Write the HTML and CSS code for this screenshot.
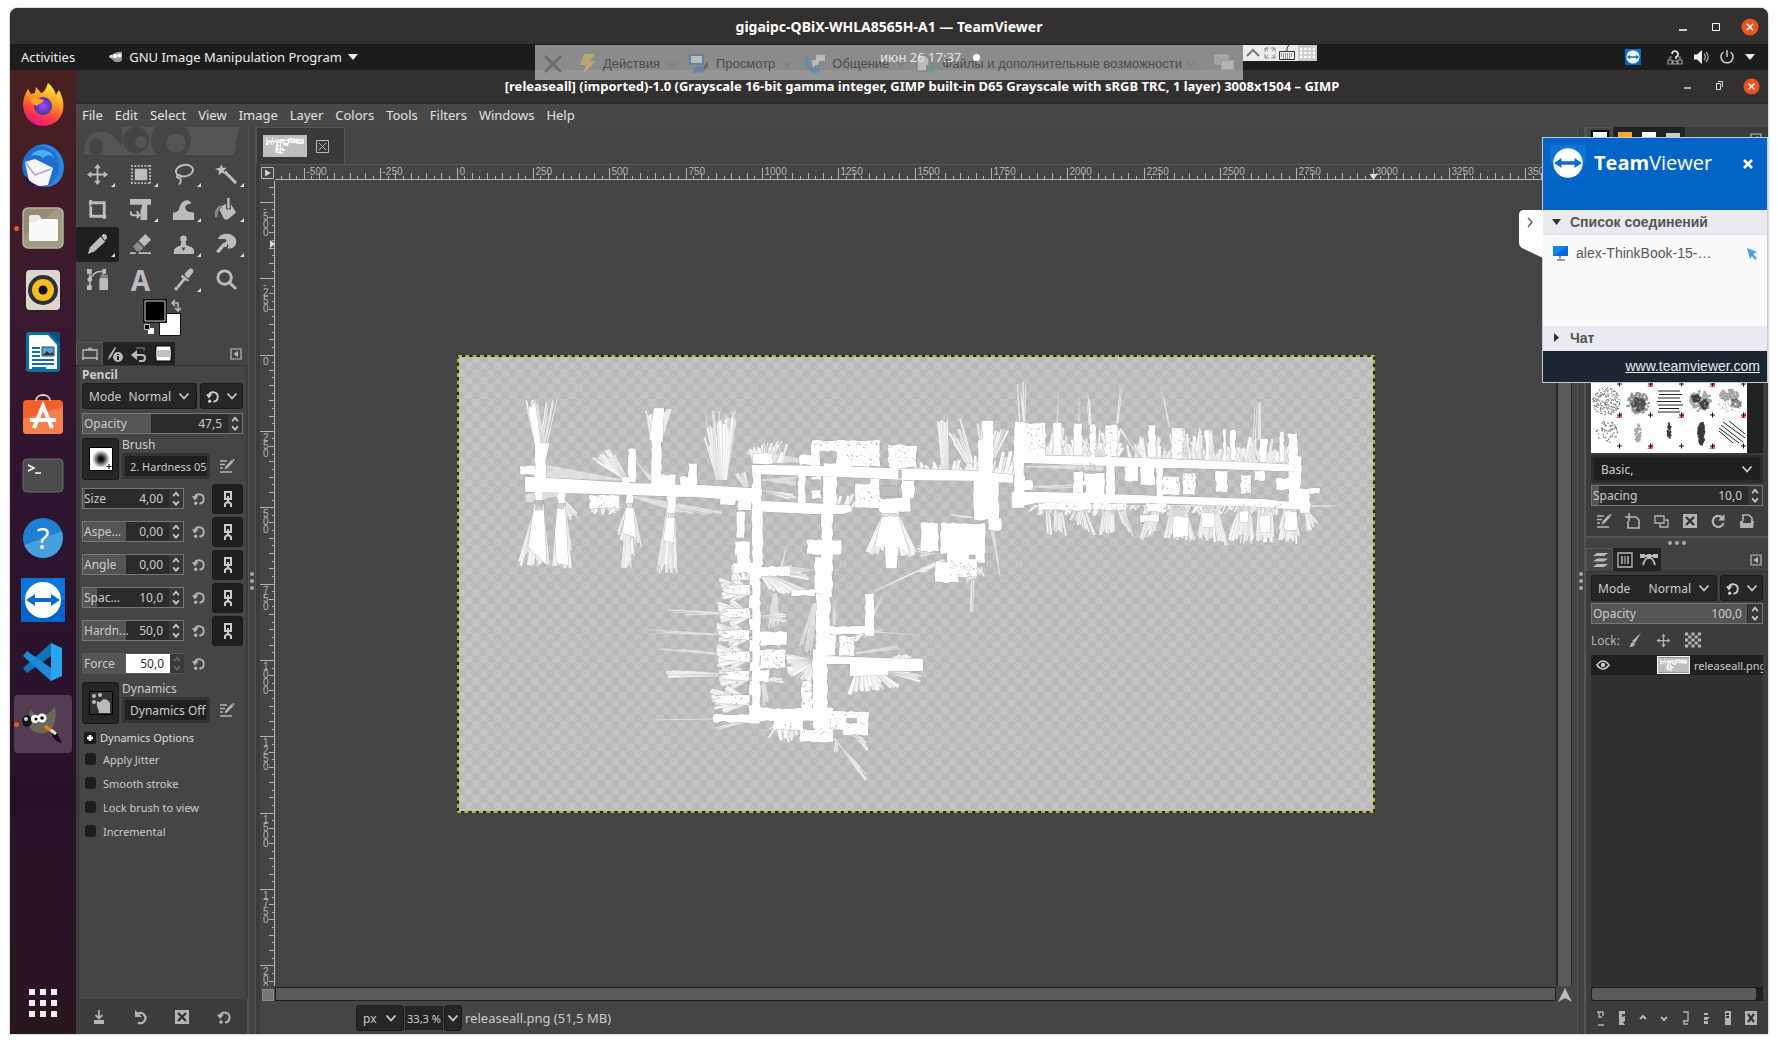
FILE: index.html
```html
<!DOCTYPE html>
<html lang="ru">
<head>
<meta charset="utf-8">
<title>gigaipc-QBiX-WHLA8565H-A1 — TeamViewer</title>
<link rel="stylesheet" href="styles.css">
</head>
<body>
<svg class="defs" width="0" height="0" aria-hidden="true">
  <defs>
    <symbol id="i-chev" viewBox="0 0 12 12"><path d="M1.500 3.500 6 8.500l4.500-5" fill="none" stroke="currentColor" stroke-width="1.800"/></symbol>
    <symbol id="i-reset" viewBox="0 0 16 16"><path d="M4 6.500a5 5 0 1 1 5 7" fill="none" stroke="currentColor" stroke-width="2"/><path d="M1 5.500h7L4 10z" fill="currentColor"/><circle cx="5" cy="13" r="1.800" fill="currentColor"/></symbol>
    <symbol id="i-undo" viewBox="0 0 16 16"><path d="M4.500 5a5 5 0 1 1 .5 8.500" fill="none" stroke="currentColor" stroke-width="2.200"/><path d="M2 1v7h7z" fill="currentColor"/></symbol>
    <symbol id="i-refresh" viewBox="0 0 16 16"><path d="M12.500 5a5.500 5.500 0 1 0 1 5" fill="none" stroke="currentColor" stroke-width="2.200"/><path d="M14.500 1v6.500H8z" fill="currentColor"/></symbol>
    <symbol id="i-edit" viewBox="0 0 16 16"><path d="M1 3h7M1 6.500h5M1 10h3M1 14h12" stroke="currentColor" stroke-width="1.600"/><path d="m5.500 11.500 1-3L12.500 2l2 1.700-6.200 6.600z" fill="currentColor"/><circle cx="14.500" cy="2" r="1" fill="currentColor"/></symbol>
    <symbol id="i-chain" viewBox="0 0 14 18"><path d="M4 2h6v7H4z" fill="none" stroke="currentColor" stroke-width="2"/><path d="M7 6v7M4 17v-3l1.500-1.500h3L10 14v3" fill="none" stroke="currentColor" stroke-width="2"/></symbol>
    <symbol id="i-spin" viewBox="0 0 12 20"><path d="M3 7.500 6 4l3 3.500M3 13l3 3.500L9 13" fill="none" stroke="currentColor" stroke-width="1.800"/></symbol>
    <symbol id="i-delete" viewBox="0 0 16 16"><path d="M1 1h14v14H1z" fill="currentColor"/><path d="m4 4 8 8m0-8-8 8" stroke="#333" stroke-width="2.400"/></symbol>
    <symbol id="i-menu" viewBox="0 0 12 12"><path d="M1 1h10v10H1z" fill="none" stroke="currentColor" stroke-width="1.200"/><path d="M8 3v6L3.500 6z" fill="currentColor"/></symbol>
    <symbol id="i-move" viewBox="0 0 24 24"><path d="M12 4v16M4 12h16" stroke="currentColor" stroke-width="2"/><path d="m12 1 3.500 4.500h-7zM12 23l3.500-4.500h-7zM1 12l4.500 3.500v-7zM23 12l-4.500 3.500v-7z" fill="currentColor"/></symbol>
    <symbol id="i-tv" viewBox="0 0 44 44"><path d="M0 0h44v44H0z" fill="#0b74dd"/><path d="M0 22h44v22H0z" fill="#0864c8"/><circle cx="22" cy="22" r="18" fill="#fff"/><path d="m5 22 9-6v4h16v-4l9 6-9 6v-4H14v4z" fill="#0b6bd0"/></symbol>
    <symbol id="i-close" viewBox="0 0 20 20"><circle cx="10" cy="10" r="9.500" fill="#e95420"/><path d="m6.500 6.500 7 7m0-7-7 7" stroke="#fff" stroke-width="1.600"/></symbol>
  </defs>
</svg>

<div class="window">
  <header class="titlebar outer">
    <h1>gigaipc-QBiX-WHLA8565H-A1 — TeamViewer</h1>
    <div class="wbtns">
      <button aria-label="Minimize"><svg width="16" height="16"><path d="M4 11h8" stroke="#fff" stroke-width="1.500"/></svg></button>
      <button aria-label="Maximize"><svg width="16" height="16"><path d="M4.500 4.500h7v7h-7z" fill="none" stroke="#fff"/></svg></button>
      <button aria-label="Close"><svg width="18" height="18"><use href="#i-close"/></svg></button>
    </div>
  </header>

  <div class="topbar">
    <button class="tb">Activities</button>
    <button class="tb app"><svg width="14" height="12" viewBox="0 0 14 12"><path d="M1 6c3-4 8-6 12-5v8c-2 3-7 3-9 0z" fill="#999"/><circle cx="6" cy="5" r="2.200" fill="#fff"/><circle cx="10.500" cy="4.500" r="2" fill="#fff"/><circle cx="2" cy="5.500" r="1.700" fill="#ddd"/></svg>GNU Image Manipulation Program<svg width="10" height="8"><path d="M0 1h10L5 7z" fill="#eee"/></svg></button>
    <div class="tray">
      <svg width="16" height="16"><use href="#i-tv"/></svg>
      <svg class="net" width="16" height="16" viewBox="0 0 16 16"><path d="M5 5a3 3 0 1 1 4 3v2" fill="none" stroke="#ddd" stroke-width="1.800"/><path d="M1 11h4v4H1zM11 11h4v4h-4zM6 12h4v3H6zM3 11V8h2M13 11V8h-2" fill="none" stroke="#999" stroke-width="1.200"/></svg>
      <svg width="16" height="16" viewBox="0 0 16 16"><path d="M1 5.500h3L9 1v14l-5-4.500H1z" fill="#eee"/><path d="M11 5a4 4 0 0 1 0 6M13 3a7 7 0 0 1 0 10" fill="none" stroke="#aaa" stroke-width="1.300"/></svg>
      <svg width="16" height="16" viewBox="0 0 16 16"><path d="M8 1v7M4.500 3a6 6 0 1 0 7 0" fill="none" stroke="#ccc" stroke-width="1.500"/></svg>
      <svg width="10" height="8"><path d="M0 1h10L5 7z" fill="#eee"/></svg>
    </div>
  </div>

  <div class="tvbar">
    <button aria-label="Закрыть" class="t-x"><svg width="18" height="18"><path d="m1 1 16 16M17 1 1 17" stroke="#4a4a4a" stroke-width="2.500"/></svg></button>
    <button class="t1"><svg width="16" height="20"><path d="M4 0h11l-5 7h6L3 20l3-9H0z" fill="#f0c05a"/></svg>Действия<svg class="cv" width="10" height="10"><use href="#i-chev"/></svg></button>
    <button class="t2"><svg width="20" height="20"><path d="M1 1h13v9H1z" fill="#eee" stroke="#3a78bc" stroke-width="2"/><path d="M4 19c0-6 4-8 10-6l1 5z" fill="#3a78bc"/><path d="m14 13 5-6v6l-4 3z" fill="#444"/></svg>Просмотр<svg class="cv" width="10" height="10"><use href="#i-chev"/></svg></button>
    <button class="t3"><svg width="21" height="20"><path d="M1 3c2-1 4 0 4 5-2 2 3 7 5 6 3-1 6 1 6 3-3 5-15 2-15-14z" fill="#3a88d8"/><path d="M12 1h9v6h-6v3l-2-3h-1zM8 6h6v5h-3l-2 3z" fill="#eee"/></svg>Общение<svg class="cv" width="10" height="10"><use href="#i-chev"/></svg></button>
    <button class="t4"><svg width="22" height="20"><path d="M1 1h8l4 4v12H1z" fill="#eee" stroke="#666"/><path d="M14 8a2 2 0 0 1 4 2h3v4h-2v5h-5v-2h-4v-6h4z" fill="#5a9a80"/></svg>Файлы и дополнительные возможности<svg class="cv" width="10" height="10"><use href="#i-chev"/></svg></button>
    <button class="t5" aria-label="Экраны"><svg width="21" height="20"><path d="M1 1h13v9H1z" fill="#bbb" stroke="#ddd"/><path d="M7 6h13v10H7z" fill="#ddd" stroke="#999"/><path d="M13 16v3M9 19h8" stroke="#999" stroke-width="2"/></svg></button>
  </div>
  <time class="clock">июн 26 17:37<i></i></time>
  <div class="minibar">
    <svg width="74" height="16"><path d="M0 0h74v16H0z" fill="#ececec"/><path d="M55 0h19v16H55z" fill="#c9c9c9"/><path d="m4 11 6-6 6 6" fill="none" stroke="#777" stroke-width="2"/><path d="M22 7V3h4M28 3h4v4M22 9v4h4M28 13h4V9M22 3l3 3m7-3-3 3m-7 7 3-3m7 3-3-3" fill="none" stroke="#888"/><path d="M36.500 6.500h15v8h-15z" fill="#eee" stroke="#333"/><path d="M38 9h12M38 11h12M40 13h8" stroke="#333" stroke-dasharray="1 1"/><path d="M44 6V3l2-3" stroke="#333" fill="none"/><path d="M57 4h16M57 8h16M57 12h16" stroke="#fff" stroke-width="2.500" stroke-dasharray="2.500 1.700"/></svg>
  </div>

  <div class="desktop">
    <nav class="dock" aria-label="Dock">
      <a href="#" aria-label="Firefox"><svg width="44" height="46" viewBox="0 0 44 46"><defs><linearGradient id="ff" x1=".7" y1="0" x2=".3" y2="1"><stop offset="0" stop-color="#fff044"/><stop offset=".4" stop-color="#ff9a1f"/><stop offset=".7" stop-color="#ff4040"/><stop offset="1" stop-color="#e3108c"/></linearGradient><radialGradient id="fp"><stop offset="0" stop-color="#9a4dff"/><stop offset="1" stop-color="#4b32b0"/></radialGradient></defs><path d="M27 2c6 5 7 9 8 12l3-5c7 13 5 24-1 30-9 9-23 7-30-1C1 30 0 19 7 8l3 5 4-1 1-6 5 6c4-1 5-5 7-10z" fill="url(#ff)"/><circle cx="22" cy="25" r="9" fill="url(#fp)"/><path d="M9 18c6-3 9 0 14 1-2 4-5 3-7 6-3-1-6-3-7-7z" fill="#ffa41c"/></svg></a>
      <a href="#" aria-label="Thunderbird"><svg width="46" height="46" viewBox="0 0 46 46"><path d="M14 4C22-1 32 1 38 8c8 9 8 23 0 31-6 6-15 6-22 3L4 32C-1 20 5 9 14 4z" fill="#1f6fd0"/><path d="M14 4c9-3 24 2 25 17 1 11-5 18-12 23 18-2 20-22 12-34C32 1 22 0 14 4z" fill="#2f86dd"/><path d="M11 13c5-8 18-8 23 1-5-3-8-2-11 1-4-3-8-4-12-2z" fill="#4fb0f2"/><path d="M5 19 15 16l18 9-5 17-13 2-6-6z" fill="#f6f6f8"/><path d="m5 19 10 13 16-6" fill="none" stroke="#a8aebc" stroke-width="1.500"/><path d="M5 33c4 5 10 9 17 11-9 1-17-3-17-11z" fill="#201a55"/></svg></a>
      <a href="#" aria-label="Files" class="running"><svg width="42" height="42" viewBox="0 0 42 42"><rect x="1" y="1" width="40" height="40" rx="5" fill="#a39a82"/><path d="M1 30V6q0-5 5-5h30z" fill="#948b76"/><rect x="1" y="1" width="40" height="40" rx="5" fill="none" stroke="#b9b19c" stroke-width="1.500"/><path d="M7 10q0-2 2-2h8l3 4h14q2 0 2 2v18q0 2-2 2H9q-2 0-2-2z" fill="#ebe8e0"/><path d="M7 15h7l3-3h17q2 0 2 2v18q0 2-2 2H9q-2 0-2-2z" fill="#fbfaf8"/></svg></a>
      <a href="#" aria-label="Rhythmbox"><svg width="36" height="42" viewBox="0 0 36 42"><rect x="1" y="1" width="34" height="40" rx="4" fill="#dcd6cb"/><circle cx="18" cy="21" r="15" fill="#2c303a"/><circle cx="18" cy="21" r="11" fill="#f5bd1f"/><circle cx="18" cy="21" r="4.500" fill="#111"/></svg></a>
      <a href="#" aria-label="LibreOffice Writer"><svg width="36" height="42" viewBox="0 0 36 42"><path d="M4 1h20l11 12v25q0 3-3 3H4q-3 0-3-3V4q0-3 3-3z" fill="#0e6fa8"/><path d="M5 4h18l9 10v24H4V5z" fill="#fdfdfd"/><path d="M24 1h11v12z" fill="#0b4f7c"/><path d="M7 17h8M7 21h8M7 25h8M7 29h22M7 33h22M7 37h14" stroke="#0e6fa8" stroke-width="1.800"/><path d="M17 16h12v9H17z" fill="#4da3e0" stroke="#444"/><path d="m18 24 4-4 3 3 2-2 2 3z" fill="#333"/></svg></a>
      <a href="#" aria-label="Ubuntu Software"><svg width="42" height="42" viewBox="0 0 42 42"><rect x="1" y="7" width="40" height="34" rx="4" fill="#f0622d"/><path d="M1 26 41 14v23q0 4-4 4H5q-4 0-4-4z" fill="#f4804e"/><path d="M14 8c0-8 14-8 14 0" fill="none" stroke="#e8cfae" stroke-width="1.800"/><path d="m12 35 9-22 9 22M8 27h26" fill="none" stroke="#fff" stroke-width="4"/></svg></a>
      <a href="#" aria-label="Terminal"><svg width="42" height="36" viewBox="0 0 42 36"><rect x="1" y="1" width="40" height="33" rx="4" fill="#4c4c4c" stroke="#6a6a6a"/><path d="m6 7 6 3-6 3M13 15h6" fill="none" stroke="#fff" stroke-width="1.500"/></svg></a>
      <a href="#" aria-label="Help" class="help"><span>?</span></a>
      <a href="#" aria-label="TeamViewer"><svg width="44" height="44"><use href="#i-tv"/></svg></a>
      <a href="#" aria-label="Visual Studio Code"><svg width="42" height="42" viewBox="0 0 42 42"><path d="M29 2 1 27l4 5 27-19z" fill="#1273b8"/><path d="M29 40 1 15l4-5 27 19z" fill="#1c8ad6"/><path d="m29 2 11 5v28l-11 5z" fill="#2aa5ee"/></svg></a>
      <a href="#" aria-label="GIMP" class="running active"><svg width="42" height="42" viewBox="0 0 42 42"><path d="M8 6c3 5 6 6 12 6 6 0 11-5 13-9 2 13 0 24-10 27C12 32 6 25 6 17z" fill="#6d6756"/><ellipse cx="5" cy="18" rx="5" ry="6" fill="#16181c"/><circle cx="4" cy="16" r="2" fill="#ccd"/><circle cx="13" cy="16" r="4" fill="#fff"/><circle cx="20" cy="15" r="4.500" fill="#fff"/><circle cx="14" cy="16" r="1.500"/><circle cx="20" cy="15" r="1.800"/><path d="m23 23 8 6" stroke="#e8852a" stroke-width="3"/><path d="m30 27 5 3 5 10c-5-1-9-4-10-9z" fill="#111"/><path d="m29 27 5 4" stroke="#ddd" stroke-width="3"/></svg></a>
      <a href="#" aria-label="Show Applications" class="grid"><svg width="30" height="30"><path d="M1 4h28M1 15h28M1 26h28" stroke="#eee" stroke-width="6" stroke-dasharray="6 5"/></svg></a>
    </nav>

    <main class="gimp">
      <header class="titlebar inner">
        <h2>[releaseall] (imported)-1.0 (Grayscale 16-bit gamma integer, GIMP built-in D65 Grayscale with sRGB TRC, 1 layer) 3008x1504 – GIMP</h2>
        <div class="wbtns">
          <button aria-label="Minimize"><svg width="16" height="16"><path d="M5 10h7" stroke="#ddd" stroke-width="1.500"/></svg></button>
          <button aria-label="Restore"><svg width="16" height="16"><path d="M5.500 5.500h4v6h-4zM7 3.500h4.500V9" fill="none" stroke="#ddd"/></svg></button>
          <button aria-label="Close"><svg width="17" height="17"><use href="#i-close"/></svg></button>
        </div>
      </header>
      <nav class="menubar">
        <button>File</button><button>Edit</button><button>Select</button><button>View</button><button>Image</button><button>Layer</button><button>Colors</button><button>Tools</button><button>Filters</button><button>Windows</button><button>Help</button>
      </nav>
      <div class="work">
        <aside class="left">
          <svg class="wilber" width="155" height="28" viewBox="0 0 155 28"><path d="M0 28C-1 8 12 2 24 6c6 2 10 8 14 14V0h117l-5 28z" fill="#555"/><g fill="#454545"><ellipse cx="12" cy="20" rx="7" ry="9"/><circle cx="52" cy="13" r="13"/><circle cx="87" cy="14" r="20"/></g><circle cx="57" cy="15" r="6" fill="#555"/><circle cx="92" cy="16" r="9.500" fill="#555"/></svg>
          <div class="tools">
            <button class="m" aria-label="Move"><svg viewBox="0 0 24 24"><use href="#i-move"/></svg></button>
            <button class="m" aria-label="Rectangle Select"><svg viewBox="0 0 24 24"><path d="M6 6h13v12H6z" fill="currentColor"/><path d="M2 3h21M2 21h21M3 2v20M22 2v20" stroke="currentColor" stroke-width="2" stroke-dasharray="2 1.500"/></svg></button>
            <button class="m" aria-label="Free Select"><svg viewBox="0 0 24 24"><ellipse cx="13" cy="8" rx="9" ry="6" fill="none" stroke="currentColor" stroke-width="2" transform="rotate(-10 13 8)"/><path d="M6 12c-3 4 2 3 3 5 1 3-1 5-2 5M5 13c3-1 5 0 5 2" fill="none" stroke="currentColor" stroke-width="2"/></svg></button>
            <button class="m" aria-label="Fuzzy Select"><svg viewBox="0 0 24 24"><path d="m10 9 12 12" stroke="currentColor" stroke-width="3"/><path d="m7 1 1 4 4 0-3 3 2 4-4-2-3 3 0-5-4-2 5-1z" fill="currentColor"/></svg></button>
            <button aria-label="Crop"><svg viewBox="0 0 24 24"><path d="M5 2v17h16M3 5h16v17" fill="none" stroke="currentColor" stroke-width="3"/><path d="M5 7h2v2H5z" fill="#454545"/></svg></button>
            <button class="m" aria-label="Transform"><svg viewBox="0 0 24 24"><path d="M1 1h22v6H1zM14 7h5v16h-7V13z" fill="currentColor"/><path d="M2 14v2q0 2 3 2h5M8 14l3 4-3 3" fill="none" stroke="currentColor" stroke-width="2"/></svg></button>
            <button class="m" aria-label="Warp"><svg viewBox="0 0 24 24"><path d="M1 23v-8c5 0 6-2 7-6 2-7 10-9 12-4 0 2-5 1-6 4-1 3 2 6 9 6v8z" fill="currentColor"/></svg></button>
            <button class="m" aria-label="Bucket Fill"><svg viewBox="0 0 24 24"><path d="m6 9 9-5 7 11-8 7q-3 2-5-1L5 13z" fill="currentColor"/><path d="M14 1v11" stroke="#454545" stroke-width="5"/><path d="M14 0v11" stroke="currentColor" stroke-width="2.500"/><path d="M7 9c-5 1-6 5-6 11" fill="none" stroke="#888" stroke-width="3"/></svg></button>
            <button class="m sel" aria-label="Pencil"><svg viewBox="0 0 24 24"><path d="m2 22 2-7L15 4l5 5L9 19z" fill="currentColor"/><path d="m16 3 2-2q4 0 4 4l-2 3z" fill="currentColor"/></svg></button>
            <button aria-label="Eraser"><svg viewBox="0 0 24 24"><path d="m10 8 7-7 6 6-7 7z" fill="currentColor"/><path d="m9 9 6 6-3 4H8l-4-5z" fill="#8a8a8a"/><path d="M1 21h6M10 21h13" stroke="currentColor" stroke-width="2"/></svg></button>
            <button class="m" aria-label="Clone"><svg viewBox="0 0 24 24"><circle cx="12" cy="6" r="3.500" fill="currentColor"/><path d="M10 8h4l1 5c5 1 7 2 8 5v4H2v-4c1-3 4-4 7-5z" fill="currentColor"/><path d="M10 15h4l-2 4z" fill="#454545"/></svg></button>
            <button class="m" aria-label="Smudge"><svg viewBox="0 0 24 24"><path d="M3 6C6-1 19-1 22 7c1 6-3 10-9 9l-4-1-5 6-3-2 7-8c2-2 4-1 4-3 0-3-6-1-9-2z" fill="currentColor"/><path d="M9 15c4 1 5-1 4-3" fill="none" stroke="#454545" stroke-width="1.500"/></svg></button>
            <button aria-label="Paths"><svg viewBox="0 0 24 24"><path d="M4 4v17M4 12C8 4 14 3 18 4v3" fill="none" stroke="currentColor" stroke-width="1.500"/><path d="M1 1h5v5H1zM1 18h5v5H1zM17 1h4v5h-4zM14 12q0-2 4.500-2t4.500 2v11h-9z" fill="currentColor"/><path d="M15 7h8v3h-8z" fill="#888"/><circle cx="4" cy="12" r="2.500" fill="currentColor"/></svg></button>
            <button class="lettr" aria-label="Text">A</button>
            <button class="m" aria-label="Color Picker"><svg viewBox="0 0 24 24"><path d="m14 5 4-4q3-2 4 1t-2 5l-3 4-4-4zM11 7l7 6-2 1-7-5z" fill="currentColor"/><path d="M14 10 6 20" stroke="currentColor" stroke-width="3"/><circle cx="4.500" cy="21.500" r="2" fill="currentColor"/></svg></button>
            <button aria-label="Zoom"><svg viewBox="0 0 24 24"><circle cx="10" cy="10" r="7" fill="none" stroke="currentColor" stroke-width="3"/><path d="m15 15 7 7" stroke="currentColor" stroke-width="3"/></svg></button>
          </div>
          <svg class="colors" width="50" height="38" viewBox="0 0 50 38"><path d="M18.500 14.500h21v22h-21z" fill="#fff" stroke="#111"/><path d="M3 1h22v22H3z" fill="#000" stroke="#111" stroke-width="2"/><path d="M4 2h20v20H4z" fill="#000" stroke="#ccc"/><path d="M31 4h6v7M34 1l-3 3 3 3m0 2 3 3 3-3" fill="none" stroke="#bbb" stroke-width="1.500"/><path d="M7 29h6v6H7z" fill="#fff"/><path d="M3.500 25.500h5v5h-5z" fill="#000" stroke="#bbb"/></svg>
          <div class="tabs">
            <button class="on" aria-label="Tool Options"><svg width="18" height="16"><path d="M2 4h14v8H2zM1 13h2M15 13h2M6 4l3-2 3 2" fill="none" stroke="currentColor" stroke-width="1.300"/></svg></button>
            <button aria-label="Device Status"><svg width="18" height="18"><path d="m2 15 1-4 6-9 1 1-5 9z" fill="currentColor"/><circle cx="12" cy="12" r="5" fill="currentColor"/><path d="M12 9v1M12 11v4" stroke="#222" stroke-width="2"/></svg></button>
            <button aria-label="Undo History"><svg width="18" height="18"><path d="M6 3h8v3" fill="none" stroke="#555" stroke-width="2"/><path d="M4 10h8q3 0 3 3t-3 3H9" fill="none" stroke="currentColor" stroke-width="2"/><path d="M1 10l6-5v10z" fill="currentColor"/></svg></button>
            <button aria-label="Images"><svg width="17" height="17"><path d="M1 1h15v15H1z" fill="#fff" stroke="#000"/><path d="M1 5h15v7H1z" fill="#c0c0c0"/></svg></button>
            <button class="tmenu" aria-label="Configure tab"><svg width="12" height="12"><use href="#i-menu"/></svg></button>
          </div>
          <div class="options">
            <strong>Pencil</strong>
            <div class="row2">
              <label class="combo"><span>Mode</span><select><option>Normal</option></select><svg width="12" height="12"><use href="#i-chev"/></svg></label>
              <button class="btn rs" aria-label="Reset mode"><svg width="15" height="15"><use href="#i-reset"/></svg><svg width="12" height="12"><use href="#i-chev"/></svg></button>
            </div>
            <label class="spin op"><b style="width:43%"></b><span>Opacity</span><input value="47,5"><svg width="12" height="20"><use href="#i-spin"/></svg></label>
            <div class="pick">
              <button class="btn big" aria-label="Brush"><svg width="24" height="24"><defs><radialGradient id="br"><stop offset="0"/><stop offset=".3" stop-color="#222"/><stop offset="1" stop-color="#fff"/></radialGradient></defs><path d="M.5.500h23v23H.5z" fill="#fff" stroke="#000"/><circle cx="12" cy="12" r="9" fill="url(#br)"/><path d="M20 17v5M17.500 19.500h5" stroke="#114"/></svg></button>
              <div><label for="brush">Brush</label><div class="pickrow"><input id="brush" class="small" value="2. Hardness 050"><button class="ic" aria-label="Edit brush"><svg width="16" height="16"><use href="#i-edit"/></svg></button></div></div>
            </div>
            <div class="sliders">
              <div class="srow"><label class="spin"><b style="width:2%"></b><span>Size</span><input value="4,00"><svg width="12" height="20"><use href="#i-spin"/></svg></label><button class="ic" aria-label="Reset"><svg width="15" height="15"><use href="#i-reset"/></svg></button><button class="btn ch" aria-label="Link"><svg width="14" height="18"><use href="#i-chain"/></svg></button></div>
              <div class="srow"><label class="spin"><b style="width:43%"></b><span>Aspe…</span><input value="0,00"><svg width="12" height="20"><use href="#i-spin"/></svg></label><button class="ic" aria-label="Reset"><svg width="15" height="15"><use href="#i-reset"/></svg></button><button class="btn ch" aria-label="Link"><svg width="14" height="18"><use href="#i-chain"/></svg></button></div>
              <div class="srow"><label class="spin"><b style="width:43%"></b><span>Angle</span><input value="0,00"><svg width="12" height="20"><use href="#i-spin"/></svg></label><button class="ic" aria-label="Reset"><svg width="15" height="15"><use href="#i-reset"/></svg></button><button class="btn ch" aria-label="Link"><svg width="14" height="18"><use href="#i-chain"/></svg></button></div>
              <div class="srow"><label class="spin"><b style="width:14%"></b><span>Spac…</span><input value="10,0"><svg width="12" height="20"><use href="#i-spin"/></svg></label><button class="ic" aria-label="Reset"><svg width="15" height="15"><use href="#i-reset"/></svg></button><button class="btn ch" aria-label="Link"><svg width="14" height="18"><use href="#i-chain"/></svg></button></div>
              <div class="srow"><label class="spin"><b style="width:43%"></b><span>Hardn…</span><input value="50,0"><svg width="12" height="20"><use href="#i-spin"/></svg></label><button class="ic" aria-label="Reset"><svg width="15" height="15"><use href="#i-reset"/></svg></button><button class="btn ch" aria-label="Link"><svg width="14" height="18"><use href="#i-chain"/></svg></button></div>
              <div class="srow"><label class="spin force"><b style="width:43%"></b><span>Force</span><input value="50,0"><svg width="12" height="20"><use href="#i-spin"/></svg></label><button class="ic" aria-label="Reset"><svg width="15" height="15"><use href="#i-reset"/></svg></button></div>
            </div>
            <div class="pick dyn">
              <button class="btn big" aria-label="Dynamics"><svg width="24" height="24"><path d="M.5.500h23v23H.5z" fill="#333" stroke="#000"/><g fill="#bbb"><circle cx="5" cy="5" r="2"/><circle cx="11" cy="4" r="2"/><circle cx="5" cy="11" r="2"/><path d="M8 10c3 2 4 1 5-1 3-2 6 0 8 3v10H10c0-4-3-6-2-12z"/></g></svg></button>
              <div><label for="dyn">Dynamics</label><div class="pickrow"><input id="dyn" value="Dynamics Off"><button class="ic" aria-label="Edit dynamics"><svg width="16" height="16"><use href="#i-edit"/></svg></button></div></div>
            </div>
            <button class="expand"><svg width="12" height="12"><rect width="12" height="12" rx="2" fill="#1a1a1a"/><path d="M6 3v6M3 6h6" stroke="#fff" stroke-width="2.500"/></svg>Dynamics Options</button>
            <label class="chk"><input type="checkbox">Apply Jitter</label>
            <label class="chk"><input type="checkbox">Smooth stroke</label>
            <label class="chk"><input type="checkbox">Lock brush to view</label>
            <label class="chk"><input type="checkbox">Incremental</label>
          </div>
          <div class="foot">
            <button aria-label="Save"><svg width="16" height="16"><path d="M8 1v8M4.500 6 8 9.500 11.500 6" fill="none" stroke="currentColor" stroke-width="1.800"/><path d="M3 11h10v4H3z" fill="currentColor"/></svg></button>
            <button aria-label="Restore"><svg width="16" height="16"><use href="#i-undo"/></svg></button>
            <button aria-label="Delete"><svg width="16" height="16"><use href="#i-delete"/></svg></button>
            <button aria-label="Reset"><svg width="16" height="16"><use href="#i-reset"/></svg></button>
          </div>
        </aside>
        <div class="split"><i></i><i></i><i></i></div>

        <section class="center">
          <div class="imgtabs">
            <div class="imgtab"><svg width="44" height="22" viewBox="457 355 918 457"><use href="#picture"/></svg><button aria-label="Close"><svg width="13" height="13"><path d="M.5.500h12v12H.5zM3 3l7 7m0-7-7 7" fill="none" stroke="#bbb"/></svg></button></div>
          </div>
          <div class="view">
            <button class="corner" aria-label="Image menu"><svg width="13" height="12"><path d="M.5.500h12v11H.5z" fill="none" stroke="#bbb"/><path d="M4 2.500v7L10 6z" fill="#ccc"/></svg></button>
            <svg class="hruler"></svg>
            <svg class="vruler"></svg>
            <div class="canvas">
              <svg class="map" width="918" height="458" viewBox="457 355 918 458">
                <defs>
                  <pattern id="chk" x="458" y="355" width="2" height="2" patternUnits="userSpaceOnUse" patternTransform="translate(458 355) scale(7.330) translate(-458 -355)"><path d="M0 0h2v2H0z" fill="#c4c4c4"/><path d="M1 0h1v1H1zM0 1h1v1H0z" fill="#b9b9b9"/></pattern>
                </defs>
                <g id="picture"><path d="M457 355h918v458H457z" fill="url(#chk)"/><g id="scan"></g></g>
                <path d="M458 356h916v456H458z" fill="none" stroke="#222" stroke-width="2"/>
                <path d="M458 356h916v456H458z" fill="none" stroke="#e8e82a" stroke-width="1.500" stroke-dasharray="4 3.300"/>
              </svg>
            </div>
            <div class="vscroll"><div></div></div>
            <div class="qm"><svg width="12" height="12"><path d="M.5.500h11v11H.5z" fill="#777" stroke="#bbb" stroke-dasharray="1 1"/></svg></div>
            <div class="hscroll"><div></div></div>
            <button class="nav" aria-label="Navigate"><svg width="14" height="14"><path d="m7 0 7 14-7-4-7 4z" fill="#bbb"/></svg></button>
          </div>
          <footer class="status">
            <label class="combo px"><select aria-label="Unit"><option>px</option></select><svg width="12" height="12"><use href="#i-chev"/></svg></label>
            <input class="zoom" aria-label="Zoom" value="33,3 %"><button class="btn zb" aria-label="Zoom list"><svg width="12" height="12"><use href="#i-chev"/></svg></button>
            <span>releaseall.png (51,5 MB)</span>
          </footer>
        </section>
        <div class="split"><i></i><i></i><i></i></div>

        <aside class="right">
          <div class="tabs">
            <button class="on" aria-label="Brushes"><svg width="18" height="18"><path d="M1 1h16v16H1z" fill="#fff" stroke="#000" stroke-width="2"/></svg></button>
            <button aria-label="Patterns"><svg width="16" height="16"><path d="M1 1h14v14H1z" fill="#ffa52a"/></svg></button>
            <button aria-label="Fonts"><svg width="16" height="16"><path d="M1 1h14v14H1z" fill="#fff"/></svg></button>
            <button aria-label="History"><svg width="16" height="16"><path d="M1 2h14v12H1z" fill="#ccc"/></svg></button>
            <button class="tmenu" aria-label="Configure tab"><svg width="12" height="12"><use href="#i-menu"/></svg></button>
          </div>
          <div class="brushes">
            <div class="bgrid"><svg id="bgrid" width="156" height="70" viewBox="0 0 156 70"></svg></div>
            <label class="combo dark"><select aria-label="Brush tag"><option>Basic,</option></select><svg width="12" height="12"><use href="#i-chev"/></svg></label>
            <label class="spin wide"><b style="width:4%"></b><span>Spacing</span><input value="10,0"><svg width="12" height="20"><use href="#i-spin"/></svg></label>
            <div class="acts">
              <button aria-label="Edit"><svg width="16" height="16"><use href="#i-edit"/></svg></button>
              <button aria-label="New"><svg width="16" height="16"><path d="M8 4h3l3 3v8H3V8" fill="none" stroke="currentColor" stroke-width="1.600"/><path d="M4 0v8M0 4h8" stroke="currentColor" stroke-width="1.600"/></svg></button>
              <button aria-label="Duplicate"><svg width="16" height="16"><path d="M2 3h9v7H2zM12 7h3v7H7v-3" fill="none" stroke="currentColor" stroke-width="1.300"/></svg></button>
              <button aria-label="Delete"><svg width="16" height="16"><use href="#i-delete"/></svg></button>
              <button aria-label="Refresh"><svg width="16" height="16"><use href="#i-refresh"/></svg></button>
              <button aria-label="Open as image"><svg width="16" height="16"><path d="M4 8V2h6l3 3v3" fill="none" stroke="currentColor" stroke-width="1.600"/><path d="M1 8h3v2h8V8h3l-1 7H1z" fill="currentColor"/></svg></button>
            </div>
          </div>
          <div class="dots"><i></i><i></i><i></i></div>
          <div class="tabs t2nd">
            <button class="on" aria-label="Layers"><svg width="18" height="16"><path d="M6 1h11l-4 3H2zM6 6.500h11l-4 3H2zM6 12h11l-4 3H2z" fill="currentColor"/></svg></button>
            <button aria-label="Channels"><svg width="16" height="16"><path d="M1 1h14v14H1z" fill="none" stroke="currentColor" stroke-width="1.300"/><path d="M5 4v8M11 4v8" stroke="currentColor" stroke-width="1.500"/><path d="M8 4v8" stroke="#777" stroke-width="2"/></svg></button>
            <button aria-label="Paths"><svg width="18" height="16"><path d="M2 4h14M3 13c1-4 3-7 6-8 3 1 5 4 6 8" fill="none" stroke="currentColor" stroke-width="1.800"/><path d="M0 2h5v4H0zM13 2h5v4h-5zM7 2h4v5H7z" fill="currentColor"/></svg></button>
            <button class="tmenu" aria-label="Configure tab"><svg width="12" height="12"><use href="#i-menu"/></svg></button>
          </div>
          <div class="layers">
            <div class="row2">
              <label class="combo"><span>Mode</span><select><option>Normal</option></select><svg width="12" height="12"><use href="#i-chev"/></svg></label>
              <button class="btn rs" aria-label="Reset mode"><svg width="15" height="15"><use href="#i-reset"/></svg><svg width="12" height="12"><use href="#i-chev"/></svg></button>
            </div>
            <label class="spin wide"><b style="width:91%"></b><span>Opacity</span><input value="100,0"><svg width="12" height="20"><use href="#i-spin"/></svg></label>
            <div class="lock">Lock:
              <button aria-label="Lock pixels"><svg width="14" height="16"><path d="M13 1 7 11l-3-2z" fill="currentColor"/><path d="M1 15c2-1 1-4 4-5l2 2c-1 3-4 3-6 3z" fill="currentColor"/></svg></button>
              <button aria-label="Lock position"><svg width="15" height="15"><use href="#i-move"/></svg></button>
              <button aria-label="Lock alpha"><svg width="16" height="16"><path d="M0 2h16M0 8h16M0 14h16" stroke="currentColor" stroke-width="3.200" stroke-dasharray="3.200 3.200"/><path d="M3.200 5h13M3.200 11h13" stroke="currentColor" stroke-width="3.200" stroke-dasharray="3.200 3.200"/></svg></button>
            </div>
            <div class="llist">
              <div class="layer"><svg width="14" height="12"><path d="M1 6q6-8 12 0-6 8-12 0z" fill="none" stroke="currentColor" stroke-width="1.600"/><circle cx="7" cy="6" r="2.200" fill="currentColor"/></svg><svg class="thumb" width="33" height="18" viewBox="457 355 918 457"><use href="#picture"/></svg><span>releaseall.png</span></div>
            </div>
            <div class="lscroll"><div></div></div>
          </div>
          <div class="foot">
            <button aria-label="New layer"><svg width="8" height="16"><path d="M0 2h6v4M2 2v5h3M1 15h6" fill="none" stroke="currentColor" stroke-width="1.300"/></svg></button>
            <button aria-label="New group"><svg width="8" height="16"><path d="M1 1h6v3H4v3l3-1v5l-2 1 2 3H1z" fill="currentColor"/></svg></button>
            <button aria-label="Raise"><svg width="8" height="16"><path d="m1 9 3-3 3 3" fill="none" stroke="currentColor" stroke-width="2"/></svg></button>
            <button aria-label="Lower"><svg width="8" height="16"><path d="m1 7 3 3 3-3" fill="none" stroke="currentColor" stroke-width="2"/></svg></button>
            <button aria-label="Duplicate"><svg width="8" height="16"><path d="M1 2h5v9H1M2 11v3h4" fill="none" stroke="currentColor" stroke-width="1.300"/></svg></button>
            <button aria-label="Merge"><svg width="8" height="16"><path d="M1 3h4v2H1zM1 7h6l-3 3H1zM1 11h4v3H1z" fill="currentColor"/></svg></button>
            <button aria-label="Mask"><svg width="8" height="16"><path d="M1 1h6v14H1z" fill="currentColor"/><path d="M2 3h3v2H2zM2 6h3v2H2z" fill="#333"/></svg></button>
            <button aria-label="Delete layer"><svg width="12" height="16"><path d="M0 1h12v14H0z" fill="currentColor"/><path d="m3 4 6 8m0-8-6 8" stroke="#333" stroke-width="2.200"/></svg></button>
          </div>
        </aside>
      </div>
    </main>
  </div>

  <aside class="tvpanel">
    <button class="handle" aria-label="Свернуть"><svg width="24" height="48"><path d="M24 0H5Q0 0 0 5v27q0 4 3 6l21 10z" fill="#fff"/><path d="m9 8 4 4-4 5" fill="none" stroke="#4a6a8a" stroke-width="1.500"/></svg></button>
    <header><svg width="36" height="36"><use href="#i-tv"/></svg><span><b>Team</b>Viewer</span><button aria-label="Закрыть"><svg width="12" height="12"><path d="m2 2 8 8m0-8-8 8" stroke="#fff" stroke-width="2.500"/></svg></button></header>
    <h3><svg width="10" height="8"><path d="M0 1h9L4.500 7z" fill="#333"/></svg>Список соединений</h3>
    <div class="conn"><svg width="17" height="16"><path d="M1 1h15v10H1z" fill="#1486f0"/><path d="M1 11 16 1v10z" fill="#0a6cd8"/><path d="M8 11v3M5 15h8" stroke="#999" stroke-width="2"/></svg><span>alex-ThinkBook-15-…</span><svg width="11" height="12"><path d="m0 0 10 4-4 2 4 4-2 2-3-4-2 3z" fill="#4a9cf5"/></svg></div>
    <h3 class="chat"><svg width="10" height="10"><path d="M2 0v9l5-4.500z" fill="#333"/></svg>Чат</h3>
    <footer><a href="#">www.teamviewer.com</a></footer>
  </aside>
</div>
<script src="script.js"></script>
</body>
</html>
```
FILE: styles.css
```css
* { box-sizing: border-box; }
body { margin: 0; background: #fff; font-family: "Noto Sans", "Open Sans", sans-serif; font-size: 12px; color: #ccc; }
button, input, select { font: inherit; color: inherit; border: 0; background: none; padding: 0; margin: 0; }
svg { display: block; flex: none; }
h1, h2, h3 { margin: 0; }
.defs { position: absolute; }

.window { position: relative; display: flex; flex-direction: column; height: calc(100vh - 18px); margin: 8px 10px 10px; border-radius: 8px 8px 0 0; overflow: hidden; background: #1d1d1d; box-shadow: 0 0 2px #888; }
.titlebar { position: relative; display: flex; align-items: center; justify-content: center; background: #323030; color: #fff; flex: none; }
.titlebar h1 { font-size: 14px; line-height: 20px; }
.titlebar h2 { font-size: 13px; line-height: 18px; white-space: nowrap; }
.outer { height: 36px; padding-top: 2px; }
.inner { height: 34px; border-bottom: 2px solid #2a2828; }
.wbtns { position: absolute; right: 9px; display: flex; align-items: center; gap: 17px; }
.inner .wbtns { right: 8px; gap: 16px; }

.topbar { display: flex; align-items: center; height: 26px; flex: none; padding: 0 13px 0 11px; background: #1d1d1d; color: #eee; font-size: 13px; }
.app { display: flex; align-items: center; gap: 6px; margin-left: 34px; }
.tray { display: flex; align-items: center; gap: 10px; margin-left: auto; }
.net { margin-left: 16px; }

.tvbar { position: absolute; z-index: 3; top: 37px; left: 525px; width: 708px; height: 35px; display: flex; align-items: center; padding-top: 2px; background: rgba(242, 242, 242, .52); font: 13px "Liberation Sans", sans-serif; color: #4c4d4d; }
.tvbar button { display: flex; align-items: center; gap: 7px; white-space: nowrap; }
.tvbar svg { opacity: .5; }
.tvbar .cv { color: #4a84b8; opacity: .6; }
.t-x { margin-left: 9px; }
.t1 { margin-left: 18px; }
.t2 { margin-left: 12px; }
.t3 { margin-left: 12px; }
.t4 { margin-left: 10px; }
.tvbar .t4 { gap: 4px; }
.t5 { margin-left: auto; margin-right: 8px; }
.clock { position: absolute; z-index: 4; top: 40px; left: 870px; display: flex; align-items: center; gap: 12px; line-height: 18px; color: #e6e6e6; font-size: 13px; white-space: nowrap; }
.clock i { width: 7px; height: 7px; border-radius: 50%; background: #fff; }
.minibar { position: absolute; z-index: 3; top: 37px; left: 1233px; }

.desktop { display: flex; flex: 1; min-height: 0; }
.dock { width: 66px; flex: none; display: flex; flex-direction: column; align-items: center; padding: 3px 0 16px; background: linear-gradient(#4b2021, #3a1a2c 22%, #2f1530 40%, #28122a 75%, #2a161e); }
.dock a { position: relative; height: 62px; width: 58px; display: flex; align-items: center; justify-content: center; text-decoration: none; }
.dock .active { background: #543c55; border-radius: 4px; height: 58px; margin-top: 2px; }
.dock .running::before { content: ""; position: absolute; left: 0; width: 5px; height: 5px; border-radius: 50%; background: #e95420; }
.dock .grid { margin-top: auto; height: 30px; }
.help span { width: 40px; height: 40px; border-radius: 50%; background: linear-gradient(160deg, #1f7fd0 50%, #45a0e0 51%); color: #fff; font-size: 29px; line-height: 40px; text-align: center; }

.gimp { flex: 1; min-width: 0; display: flex; flex-direction: column; background: #454545; }
.menubar { display: flex; gap: 12px; height: 23px; padding: 0 0 2px 6px; background: #484848; font-size: 13px; color: #e2e2e2; flex: none; }
.work { flex: 1; min-height: 0; display: flex; }
.left { width: 172px; flex: none; display: flex; flex-direction: column; }
.wilber { margin-left: 8px; }
.tools { display: grid; grid-template-columns: repeat(4, 43px); grid-auto-rows: 35px; margin-top: 2px; color: #bcbcbc; }
.tools button { position: relative; display: flex; align-items: center; justify-content: center; border-radius: 3px; }
.tools svg { width: 23px; height: 23px; }
.tools .m::after { content: ""; position: absolute; right: 4px; bottom: 5px; border: solid transparent; border-width: 2px; border-right-color: #ddd; border-bottom-color: #ddd; }
.tools .sel { background: #1f1f1f; }
.lettr { font-weight: 700; font-size: 28px; line-height: 30px; }
.colors { margin: 2px 0 5px 65px; }
.tabs { display: flex; height: 24px; flex: none; align-items: stretch; color: #bbb; border-bottom: 1px solid #333; }
.tabs button { width: 24px; display: flex; align-items: center; justify-content: center; background: #232323; }
.tabs .on { width: 27px; background: #454545; border: 1px solid #555; border-bottom: 0; }
.tabs .tmenu { margin-left: auto; background: none; }
.options { flex: 1; min-height: 0; padding: 1px 3px 0 2px; border: solid #3c3c3c; border-width: 0 2px 0 4px; }
.options strong { display: block; line-height: 16px; height: 16px; }
.row2 { display: flex; gap: 3px; height: 26px; }
.combo { display: flex; align-items: center; flex: 1; padding: 0 6px; background: #262626; border: 1px solid #1a1a1a; border-radius: 3px; }
.combo select { appearance: none; flex: 1; text-align: right; padding-right: 7px; outline: 0; min-width: 0; }
.btn { background: #262626; border: 1px solid #1a1a1a; border-radius: 3px; display: flex; align-items: center; justify-content: center; }
.rs { width: 43px; gap: 6px; }
.spin { position: relative; display: flex; align-items: center; width: 102px; height: 21px; border: 1px solid #777; background: #2b2b2b; white-space: nowrap; }
.spin b { position: absolute; left: 0; top: 0; bottom: 0; background: #555; }
.spin span { position: absolute; left: 1px; }
.spin input { position: relative; flex: 1; width: 0; text-align: right; padding-right: 6px; }
.spin svg { position: relative; width: 14px; background: #383838; height: 19px; }
.op, .wide { width: 100%; }
.op { margin: 4px 0; }
.pick { display: flex; gap: 3px; height: 44px; }
.pick > div { flex: 1; }
.pick label { display: block; line-height: 14px; height: 15px; }
.big { width: 37px; height: 42px; flex: none; }
.pickrow { display: flex; align-items: center; gap: 9px; }
.pickrow input { width: 88px; height: 26px; background: #202020; border: 3px solid #333; padding-left: 5px; }
.pickrow .small { font-size: 11px; }
.ic { display: flex; }
.ic, .acts, .foot, .lock { color: #b4b4b4; }
.sliders { display: grid; grid-auto-rows: 33px; }
.srow { display: flex; align-items: center; }
.srow .ic { margin: 0 6px 0 7px; }
.srow .ch { width: 31px; height: 30px; margin-left: auto; background: #1f1f1f; color: #ccc; }
.force { border-color: #555; background: #454545; }
.force input { background: #fff; color: #333; flex: none; width: 44px; margin-left: 43px; height: 19px; }
.force svg { color: #666; }
.dyn { margin: 2px 0 3px; }
.expand { display: flex; align-items: center; gap: 4px; font-size: 11px; line-height: 18px; margin-left: 2px; color: #ddd; }
.chk { display: flex; align-items: center; gap: 7px; height: 24px; margin-left: 3px; font-size: 11px; }
.chk input { appearance: none; width: 11px; height: 12px; background: #1e1e1e; border-radius: 3px; }
.foot { height: 35px; flex: none; display: flex; align-items: center; justify-content: space-around; background: #3c3c3c; padding: 0 2px; }
.left .foot { border-right: 1px solid #555; }

.split { width: 8px; flex: none; background: #424242; border: solid #555; border-width: 0 1px; display: flex; flex-direction: column; align-items: center; justify-content: center; gap: 3px; }
.split i, .dots i { width: 4px; height: 4px; border-radius: 50%; background: #aaa; }

.center { flex: 1; min-width: 0; display: flex; flex-direction: column; padding-right: 4px; border-left: 4px solid #3c3c3c; }
.imgtabs { height: 38px; flex: none; border-bottom: 1px solid #5a5a5a; }
.imgtab { width: 89px; height: 37px; margin-left: -4px; background: #393939; border: 1px solid #555; border-bottom: 0; display: flex; align-items: center; gap: 9px; padding-left: 6px; }
.view { flex: 1; min-height: 0; display: grid; grid-template-columns: 15px 1fr 17px; grid-template-rows: 16px 1fr 18px; }
.corner, .qm { display: flex; align-items: center; justify-content: center; }
.hruler, .vruler { width: 100%; height: 100%; min-height: 0; min-width: 0; overflow: hidden; }
.hruler text, .vruler text { font: 10px "Liberation Sans", sans-serif; fill: #b4b4b4; }
.vscroll { grid-row: 1 / 3; grid-column: 3; background: #2a2a2a; border: solid #2a2a2a; border-width: 1px 1px 0 2px; margin-right: 1px; display: flex; }
.vscroll div, .hscroll div { flex: 1; background: #5b5b5b; }
.canvas { grid-row: 2; grid-column: 2; display: flex; align-items: center; justify-content: center; overflow: hidden; background: #444; }
.vruler { grid-row: 2; grid-column: 1; }
.hscroll { grid-row: 3; grid-column: 2; height: 14px; margin-top: 1px; border: 1px solid #202020; display: flex; }
.nav { display: flex; align-items: center; justify-content: center; }
.status { height: 30px; flex: none; display: flex; align-items: center; padding: 0 0 2px 96px; font-size: 13px; color: #ccc; }
.px { flex: none; width: 48px; height: 26px; font-size: 12px; }
.px select { text-align: left; padding: 0; }
.zoom { width: 38px; height: 24px; margin: 0 1px; background: #252525; text-align: center; font-size: 11px; }
.zb { width: 18px; height: 26px; margin-right: 3px; }

.right { width: 183px; flex: none; display: flex; flex-direction: column; background: #3c3c3c; border-left: 1px solid #555; }
.brushes { height: 387px; padding: 0 5px; border-bottom: 2px solid #555; display: flex; flex-direction: column; flex: none; }
.bgrid { flex: 1; display: flex; align-items: flex-end; background: #222; }
.combo.dark { flex: none; height: 28px; background: #1f1f1f; border: 3px solid #2b2b2b; padding: 0 7px; margin: 2px 0; }
.combo.dark select { text-align: left; }
.spin.wide { height: 21px; flex: none; }
.layers .wide { margin: 2px 0 1px; }
.acts { height: 30px; display: flex; align-items: center; justify-content: space-between; padding: 0 8px 0 5px; flex: none; }
.dots { height: 10px; display: flex; align-items: center; justify-content: center; gap: 3px; background: #424242; flex: none; }
.t2nd { background: #424242; }
.layers { flex: 1; min-height: 0; display: flex; flex-direction: column; padding: 3px 5px 0; }
.layers .row2 { flex: none; }
.lock { display: flex; align-items: center; gap: 14px; height: 30px; flex: none; }
.lock button:first-of-type { margin-left: -6px; }
.llist { flex: 1; background: #303030; }
.layer { display: flex; align-items: center; height: 20px; padding-left: 5px; background: #1f1f1f; overflow: hidden; }
.thumb { margin: 0 4px 0 47px; border: 1px solid #fff; }
.layer span { white-space: nowrap; font-size: 11px; }
.lscroll { height: 14px; padding: 1px 7px 1px 1px; background: #202020; display: flex; }
.lscroll div { flex: 1; background: #5b5b5b; border-radius: 2px; }
.right .foot { height: 33px; justify-content: space-between; padding: 0 11px; }

.tvpanel { position: absolute; z-index: 5; right: 0; top: 129px; width: 226px; border: 1px solid #c5ccd6; font: 14px "Liberation Sans", sans-serif; color: #555; background: #fafafa; }
.handle { position: absolute; left: -24px; top: 72px; }
.tvpanel header { height: 72px; padding: 7px 13px 0 7px; display: flex; align-items: flex-start; background: #0364c8; color: #fff; font: 20px/36px "Open Sans", sans-serif; }
.tvpanel header span { margin-left: 8px; }
.tvpanel header button { margin: 13px 0 0 auto; }
.tvpanel h3 { height: 25px; display: flex; align-items: center; gap: 8px; padding-left: 9px; background: #e8eaef; border-bottom: 1px solid #dfe2e8; font-size: 14px; }
.conn { height: 91px; display: flex; align-items: flex-start; padding: 10px 9px 0; gap: 7px; line-height: 17px; }
.conn svg:last-child { margin: 3px 0 0 auto; }
.tvpanel footer { height: 31px; background: #1c2630; text-align: right; padding-right: 7px; line-height: 31px; }
.tvpanel a { color: #e8edf2; font-size: 14px; }
```
FILE: script.js
```js
const NS = 'http://www.w3.org/2000/svg';
let seed = 7;
const rnd = () => (seed = (seed * 16807) % 2147483647) / 2147483647;
const add = (parent, tag, attrs, text) => {
  const el = document.createElementNS(NS, tag);
  for (const k in attrs) el.setAttribute(k, attrs[k]);
  if (text) el.textContent = text;
  parent.appendChild(el);
  return el;
};

/* Laser-scan floor plan: solid corridors plus fans of scan rays. */
function sheet(transform) {
  const parts = { solid: '', bright: '', rays: '', faint: '', holes: '', specks: '' };
  const api = {
    poly(s) { parts.solid += 'M' + s + 'z'; },
    rect(...list) { for (const [x, y, w, h] of list) api.rough(x, y, w, h); },
    rough(x, y, w, h) {
      const j = () => (rnd() - 0.5) * 6;
      let d = `M${x} ${y}`;
      for (let i = 12; i < w; i += 12) d += `L${x + i} ${y + j()}`;
      d += `L${x + w} ${y}`;
      for (let i = 12; i < h; i += 12) d += `L${x + w + j()} ${y + i}`;
      d += `L${x + w} ${y + h}`;
      for (let i = w - 12; i > 0; i -= 12) d += `L${x + i} ${y + h + j()}`;
      d += `L${x} ${y + h}`;
      for (let i = h - 12; i > 0; i -= 12) d += `L${x + j()} ${y + i}`;
      parts.solid += d + 'z';
    },
    fan(ax, ay, aw, x1, y1, x2, y2, n, w = 7, faint = false) {
      const m = n > 3 ? Math.round(n * 1.5) : n;
      for (let i = 0; i < m; i++) {
        const t = m > 1 ? Math.min(1, Math.max(0, (i + (m > 3 ? rnd() - 0.5 : 0)) / (m - 1))) : 0;
        const k = 1 - rnd() * rnd() * 0.45;
        const bx = ax + (t - 0.5) * aw;
        const tx = bx + (x1 + (x2 - x1) * t - bx) * k, ty = ay + (y1 + (y2 - y1) * t - ay) * k;
        const L = Math.hypot(tx - bx, ty - ay) || 1;
        const nx = -(ty - ay) / L, ny = (tx - bx) / L, q = w * (0.3 + rnd() * 0.9) / 2;
        parts[faint ? 'faint' : (rnd() < 0.65 ? 'bright' : 'rays')] +=
          `M${bx - nx * 2} ${ay - ny * 2}L${tx - nx * q} ${ty - ny * q}L${tx + nx * q} ${ty + ny * q}L${bx + nx * 2} ${ay + ny * 2}z`;
      }
    },
    comb(x1, x2, y, len, step = 9) {
      for (let x = x1; x < x2; x += step * (0.4 + rnd())) {
        const l = len * (0.2 + rnd() * 0.8), s = (rnd() - 0.5) * 44, w = 2 + rnd() * 6;
        parts[rnd() < 0.7 ? 'bright' : 'rays'] += `M${x - w} ${y}L${x + s - w} ${y + l}L${x + s + w / 2} ${y + l * 0.95}L${x + w} ${y}z`;
      }
    },
    hole(...l) { for (const [x, y, w, h] of l) parts.holes += `M${x} ${y}h${w}v${h}h${-w}z`; },
    specks(x, y, w, h, n) {
      for (let i = 0; i < n; i++) parts.specks += `M${(x + rnd() * w) | 0} ${(y + rnd() * h) | 0}l${1 + rnd() * 5} ${rnd() * 4 - 2}l${-rnd() * 2} ${1 + rnd() * 4}l-3 -1z`;
    },
    draw() {
      const g = add(document.getElementById('scan'), 'g', { transform });
      add(g, 'path', { d: parts.faint, fill: '#fff', opacity: 0.5 });
      add(g, 'path', { d: parts.rays, fill: '#fff', opacity: 0.7 });
      add(g, 'path', { d: parts.bright, fill: '#fff', opacity: 0.95, stroke: '#aaa', 'stroke-width': 0.5 });
      add(g, 'path', { d: parts.solid, fill: '#fff', stroke: '#8f8f8f', 'stroke-width': 1.5 });
      add(g, 'path', { d: parts.solid, fill: '#fdfdfd' });
      add(g, 'path', { d: parts.holes, fill: '#bdbdbd', stroke: '#999' });
      add(g, 'path', { d: parts.specks, fill: '#b4b4b4' });
    }
  };
  return api;
}

const a = sheet('translate(500 380) scale(.3333)');
a.poly('75 290L250 300 400 310 600 315 760 325 760 365 600 352 400 345 75 335');
a.rect([105, 190, 32, 110], [385, 207, 22, 100], [455, 178, 30, 140], [565, 250, 25, 80], [478, 285, 50, 35], [540, 290, 26, 30],
  [105, 330, 25, 60], [173, 335, 22, 50], [380, 345, 18, 40], [502, 345, 24, 70], [660, 350, 45, 24], [60, 258, 45, 25], [367, 290, 22, 20]);
a.fan(120, 200, 26, 75, 55, 110, 60, 7, 8); a.fan(128, 200, 20, 140, 60, 172, 55, 4, 4);
a.poly('105 195L85 90 105 65 122 190 148 190 137 240 105 240');
a.fan(468, 190, 26, 438, 90, 510, 85, 10, 9); a.poly('448 180L462 85 492 85 488 185');
a.fan(665, 300, 30, 615, 92, 712, 90, 12, 9, true); a.fan(665, 300, 26, 605, 150, 700, 100, 9, 8);
a.fan(375, 295, 10, 275, 235, 330, 200, 9, 8); a.fan(370, 300, 8, 120, 255, 130, 290, 10, 9, true);
a.fan(460, 300, 20, 400, 235, 420, 260, 4, 3);
a.fan(117, 380, 22, 55, 560, 148, 560, 16, 12); a.poly('105 360L85 500 140 555 130 360');
a.fan(184, 370, 18, 160, 560, 218, 570, 13, 11); a.poly('173 370L165 460 170 550 205 555 195 370'); a.fan(190, 360, 8, 205, 420, 250, 420, 5, 5);
a.fan(390, 370, 14, 345, 475, 425, 505, 8, 7); a.fan(385, 390, 10, 365, 570, 405, 560, 7, 8); a.poly('380 370L368 460 408 472 398 370');
a.fan(512, 390, 22, 470, 580, 530, 580, 15, 8); a.poly('502 400L490 480 520 490 525 400');
a.rect([268, 345, 90, 40]); a.comb(270, 360, 380, 25); a.specks(270, 345, 90, 50, 20);
a.fan(400, 350, 14, 590, 410, 680, 400, 6, 7, true); a.fan(200, 340, 10, 75, 370, 75, 345, 7, 9, true);
a.fan(740, 325, 8, 700, 280, 735, 275, 5, 6);
/* central block */
a.poly('757 255L980 258 1420 272 1540 285 1540 308 1420 302 1225 300 1010 290 785 283 757 290');
a.rect([757, 255, 28, 340], [757, 395, 32, 160], [748, 550, 32, 480], [757, 560, 23, 350], [970, 250, 40, 150], [895, 285, 20, 85],
  [965, 390, 32, 260], [945, 530, 50, 110], [948, 640, 42, 180], [938, 810, 44, 190], [922, 480, 102, 42], [945, 990, 50, 95], [900, 1050, 100, 35]);
a.poly('757 362L1050 375 1058 392 1030 402 940 402 757 393');
a.rect([935, 182, 205, 30], [935, 182, 26, 75], [1010, 200, 130, 60], [1165, 195, 85, 68], [1110, 290, 30, 95], [1065, 312, 74, 70], [1205, 300, 38, 55], [1139, 355, 90, 40], [1145, 390, 50, 18]);
a.specks(1010, 190, 240, 70, 60); a.specks(1070, 320, 70, 55, 22); a.hole([1140, 318, 55, 32]); a.specks(940, 185, 200, 10, 20);
a.fan(950, 245, 20, 735, 210, 760, 245, 9, 12, true); a.comb(762, 850, 250, -60, 6); a.fan(800, 245, 25, 785, 190, 850, 180, 7, 6);
a.rect([758, 220, 60, 30], [900, 225, 35, 30]);
a.comb(1250, 1420, 275, -38, 10); a.fan(1335, 270, 18, 1312, 120, 1342, 120, 6, 8); a.fan(1410, 250, 20, 1345, 160, 1380, 115, 6, 7);
a.rect([1435, 180, 45, 100], [1447, 122, 33, 80]); a.comb(1400, 1540, 285, -75, 7); a.fan(1465, 240, 30, 1430, 130, 1525, 150, 12, 7);
a.rect([1422, 300, 74, 120], [1465, 415, 38, 36], [1262, 428, 52, 86], [1322, 430, 134, 90], [1340, 510, 90, 80], [1305, 545, 70, 62], [1430, 500, 25, 48]);
a.comb(1375, 1445, 560, 48, 4); a.specks(1350, 540, 90, 60, 50); a.hole([1408, 525, 18, 12], [1196, 270, 8, 25]);
a.fan(1330, 540, 10, 1255, 570, 1250, 590, 5, 6); a.fan(1478, 450, 8, 1505, 610, 1490, 520, 3, 6, true); a.fan(1418, 600, 6, 1412, 705, 1418, 700, 2, 6);
a.fan(1260, 570, 2, 1110, 638, 1115, 640, 2, 2); a.fan(1300, 520, 10, 1250, 500, 1260, 530, 4, 4);
a.fan(1172, 400, 40, 1100, 525, 1250, 530, 19, 14); a.poly('1148 400L1125 500 1155 500 1158 565 1190 565 1195 500 1230 525 1192 400');
a.fan(780, 330, 10, 890, 345, 890, 365, 6, 8); a.fan(790, 300, 10, 895, 290, 890, 315, 5, 5, true); a.rect([935, 290, 28, 10], [935, 330, 28, 25]);
a.comb(1010, 1058, 385, -45, 8);
/* west side of the shaft */
a.rect([715, 360, 40, 30], [710, 395, 24, 78], [705, 485, 45, 40], [700, 550, 60, 28], [712, 520, 38, 35]); a.comb(705, 757, 600, -60, 6);
for (const [y, x] of [[630, 655], [700, 650], [765, 648], [830, 645], [888, 650], [960, 628]]) {
  a.fan(757, y, 20, x, y - 34, x + 10, y + 26, 13, 14);
  a.fan(757, y, 20, x + 40, y - 44, x + 40, y + 38, 9, 12);
  a.poly(`757 ${y - 16}L${x + 60} ${y - 14} ${x + 20} ${y - 12} ${x + 36} ${y - 4} ${x + 8} ${y} ${x + 30} ${y + 10} ${x + 70} ${y + 12} 757 ${y + 16}`);
  a.specks(690, y - 30, 60, 60, 20);
}
a.fan(700, 700, 6, 505, 690, 530, 705, 3, 3); a.fan(690, 765, 6, 430, 748, 430, 760, 3, 3, true); a.fan(690, 825, 6, 430, 805, 520, 805, 3, 3, true);
a.fan(700, 885, 8, 498, 872, 498, 892, 8, 8); a.fan(700, 1016, 6, 450, 1020, 480, 1020, 2, 3); a.fan(720, 1028, 10, 640, 1045, 650, 1050, 3, 5);
a.rect([640, 1004, 120, 22], [775, 985, 170, 38], [820, 1020, 90, 30], [982, 995, 124, 70], [940, 985, 60, 60]);
a.comb(822, 900, 1040, 50, 9); a.specks(850, 1030, 150, 30, 30); a.specks(985, 1000, 110, 50, 30); a.hole([1040, 1015, 30, 14], [1000, 1050, 28, 22]);
a.fan(1040, 1050, 20, 1100, 1085, 1104, 1112, 9, 11); a.fan(1003, 1075, 6, 1098, 1180, 1098, 1205, 6, 6); a.fan(1010, 1085, 5, 1003, 1125, 1010, 1125, 2, 5);
/* between shafts */
a.fan(790, 575, 20, 880, 560, 940, 600, 9, 12); a.fan(790, 580, 20, 820, 640, 940, 640, 11, 10); a.rect([780, 560, 90, 28], [875, 630, 70, 18]);
a.fan(825, 640, 10, 805, 750, 835, 740, 6, 7, true); a.rect([780, 755, 80, 40], [780, 810, 75, 55], [770, 870, 38, 35]); a.specks(785, 810, 75, 55, 40);
a.fan(780, 710, 16, 860, 700, 860, 725, 6, 6); a.fan(790, 900, 10, 850, 890, 850, 908, 4, 6); a.fan(790, 910, 10, 790, 980, 808, 975, 4, 4, true);
a.fan(945, 670, 8, 890, 820, 935, 820, 6, 5, true); a.fan(940, 840, 8, 858, 822, 860, 870, 9, 14); a.fan(940, 850, 8, 860, 880, 925, 910, 8, 10);
a.rect([905, 905, 30, 80]); a.specks(905, 905, 30, 70, 24); a.fan(845, 558, 2, 862, 485, 865, 485, 2, 2, true); a.fan(940, 570, 4, 860, 560, 865, 575, 4, 3);
/* east */
a.rect([985, 740, 138, 22], [1095, 642, 27, 125], [982, 765, 25, 60], [1018, 768, 45, 60]); a.comb(1070, 1120, 760, 28, 11); a.specks(1020, 770, 40, 50, 16);
a.poly('980 828L1160 835 1268 836 1270 872 1165 874 1165 886 1050 888 1050 852 980 852');
a.fan(1150, 850, 20, 1225, 818, 1270, 870, 8, 10); a.fan(1150, 875, 10, 1265, 880, 1262, 905, 5, 8); a.fan(1100, 870, 60, 1045, 945, 1200, 920, 13, 12);
a.fan(1070, 820, 6, 1200, 795, 1205, 805, 3, 3, true); a.fan(1120, 755, 6, 1250, 765, 1170, 745, 2, 2, true); a.fan(1122, 700, 3, 1150, 640, 1150, 650, 2, 2, true);
a.fan(1003, 735, 6, 1000, 660, 1010, 660, 3, 3, true); a.fan(1415, 412, 4, 1345, 403, 1345, 410, 2, 4);
a.draw();

const b = sheet('translate(960 360) scale(.3333)');
b.poly('160 285L430 290 700 300 1025 315 1025 335 800 328 440 318 190 308 160 308');
b.poly('155 395L340 398 600 408 912 418 985 425 1045 435 1045 450 880 440 600 430 230 428 155 445');
b.rect([163, 185, 30, 260], [165, 190, 92, 100], [437, 315, 28, 90], [590, 318, 18, 95], [985, 315, 38, 130], [1020, 385, 30, 75], [1050, 385, 30, 16], [340, 335, 30, 65], [372, 340, 62, 65], [192, 362, 25, 26],
  [608, 350, 50, 55], [668, 340, 38, 65], [768, 332, 35, 65], [842, 345, 30, 55], [542, 320, 42, 55], [495, 318, 40, 45], [883, 332, 30, 30], [948, 355, 38, 32], [995, 290, 30, 25]);
b.rect([280, 190, 24, 95], [342, 190, 24, 95], [390, 195, 16, 95], [435, 195, 36, 95], [565, 195, 22, 95], [635, 205, 34, 90], [735, 210, 12, 90], [790, 208, 8, 95], [812, 210, 14, 90], [900, 235, 22, 70], [960, 215, 12, 90], [985, 220, 26, 90]);
b.comb(260, 470, 292, -100, 5); b.comb(260, 470, 292, -45, 5); b.comb(510, 700, 302, -85, 7); b.comb(610, 760, 300, -100, 6); b.comb(640, 1000, 308, -50, 5); b.comb(700, 1000, 312, -90, 8);
b.fan(540, 290, 10, 480, 205, 500, 240, 5, 5); b.fan(185, 190, 12, 172, 65, 180, 65, 2, 4); b.fan(192, 190, 4, 190, 60, 197, 65, 2, 4);
b.fan(293, 190, 3, 297, 68, 298, 68, 1, 3, true); b.fan(390, 195, 6, 380, 100, 388, 100, 3, 4); b.fan(472, 190, 4, 482, 75, 486, 75, 2, 3);
b.fan(628, 200, 2, 602, 78, 604, 78, 2, 3, true); b.fan(880, 290, 6, 886, 120, 892, 120, 2, 3); b.fan(898, 240, 6, 895, 115, 900, 118, 3, 4);
b.fan(357, 190, 1, 357, 75, 357, 75, 1, 2, true);
b.fan(200, 320, 8, 435, 315, 435, 330, 5, 6, true); b.fan(215, 380, 8, 345, 375, 345, 390, 3, 5, true);
b.comb(230, 980, 435, 34, 7);
b.rect([235, 430, 160, 20], [400, 430, 100, 20], [560, 430, 60, 25]);
b.fan(262, 445, 8, 262, 525, 275, 525, 4, 7); b.fan(295, 445, 20, 280, 515, 318, 528, 5, 5); b.fan(360, 445, 30, 330, 480, 408, 530, 8, 7);
b.fan(445, 445, 30, 420, 530, 460, 520, 9, 9); b.fan(480, 440, 20, 490, 490, 522, 535, 6, 8); b.fan(585, 445, 30, 538, 548, 580, 520, 9, 9); b.rect([540, 465, 55, 20]);
b.fan(655, 440, 40, 615, 535, 705, 545, 18, 11); b.fan(750, 440, 40, 715, 535, 800, 560, 14, 11); b.fan(855, 440, 30, 800, 545, 880, 555, 16, 9);
b.fan(915, 440, 40, 890, 545, 940, 550, 12, 11); b.fan(990, 440, 30, 955, 540, 1020, 555, 15, 10); b.rect([640, 470, 45, 60], [900, 465, 30, 50], [975, 455, 35, 55], [725, 460, 38, 40], [838, 455, 28, 30]);
b.fan(1040, 455, 10, 1045, 520, 1075, 492, 5, 10); b.fan(1030, 438, 3, 1140, 437, 1130, 440, 2, 3, true);
b.specks(195, 195, 60, 80, 30); b.specks(390, 200, 80, 90, 40); b.specks(640, 205, 60, 90, 30); b.specks(345, 310, 60, 18, 18); b.specks(610, 340, 100, 50, 40); b.specks(230, 432, 750, 16, 60); b.specks(840, 345, 60, 50, 18);
b.hole([372, 377, 6, 18]);
b.draw();

/* Rulers: one label per 250 image pixels at 33.3 % zoom, origin at the image corner. */
const PER = 76.35;
function rulers() {
  const map = document.querySelector('.map').getBoundingClientRect();
  const h = document.querySelector('.hruler'), v = document.querySelector('.vruler');
  h.innerHTML = v.innerHTML = '';
  const hb = h.getBoundingClientRect(), vb = v.getBoundingClientRect();
  let dh = '', dv = '';
  for (let i = -40; i < 160; i++) {
    const major = i % 10 === 0, mid = i % 2 === 0;
    const x = Math.round(map.left - hb.left + i * PER / 10) + 0.5;
    const y = Math.round(map.top - vb.top + i * PER / 10) + 0.5;
    dh += `M${x} ${major ? 3 : mid ? 8 : 11}V15`;
    dv += `M${major ? 0 : mid ? 9 : 12} ${y}H15`;
    if (major) {
      const label = String(i * 25);
      if (x > 0 && x < hb.width) add(h, 'text', { x: x + 2, y: 10 }, label);
      if (y > 0 && y < vb.height) {
        const n = [...label];
        add(v, 'text', { x: n.map(() => 3).join(' '), y: n.map((c, k) => y + 9 + k * 8).join(' ') }, label);
      }
    }
  }
  add(h, 'path', { d: dh + `M0 14.500H${hb.width}`, stroke: '#b4b4b4', fill: 'none' });
  add(v, 'path', { d: dv + `M14.500 0V${vb.height}`, stroke: '#b4b4b4', fill: 'none' });
  const mx = map.right - hb.left;
  add(h, 'path', { d: `M${mx - 5} 9h8l-4 6z`, fill: '#ddd' });
  add(v, 'path', { d: 'M10 59v8l5-4z', fill: '#ddd' });
}
rulers();
addEventListener('resize', rulers);

/* Brush thumbnails */
const grid = document.getElementById('bgrid');
add(grid, 'path', { d: 'M0 0h156v70H0z', fill: '#fff' });
const blob = (cx, cy, rx, ry, n, s, o) => {
  let d = '';
  for (let i = 0; i < n; i++) {
    const t = rnd() * 6.28, r = Math.sqrt(rnd());
    d += `M${cx + Math.cos(t) * r * rx} ${cy + Math.sin(t) * r * ry}h${s}v${s}h${-s}z`;
  }
  add(grid, 'path', { d, fill: '#222', opacity: o });
};
blob(15, 18, 14, 14, 260, 1, 0.6); blob(46, 19, 11, 11, 120, 2, 0.5); blob(46, 20, 6, 6, 80, 3, 0.6);
add(grid, 'path', { d: 'M67 8h22M68 11.500h23M67 15h22M66 18.500h24M67 22h25M68 25.500h20M67 29h22', stroke: '#222', fill: 'none' });
blob(108, 17, 11, 10, 90, 2.500, 0.4); blob(104, 14, 4, 4, 30, 2, 0.8); blob(112, 20, 4, 5, 30, 2, 0.8); blob(137, 11, 9, 6, 60, 2.500, 0.4); blob(144, 19, 5, 4, 30, 2.500, 0.5); blob(138, 21, 12, 9, 60, 1, 0.3);
blob(15, 48, 11, 11, 60, 1.300, 0.6); blob(46, 49, 3, 9, 60, 1.800, 0.4); blob(77, 49, 2, 10, 20, 2, 0.9); blob(109, 49, 3, 11, 90, 2.500, 0.9);
add(grid, 'path', { d: 'M132 39l22 16M130 42l22 17M128 45l20 15M128 48l14 12M138 38l16 13', stroke: '#222', fill: 'none' });
for (let r = 0; r < 3; r++) for (let c = 0; c < 5; c++) {
  const x = 28 + c * 31, y = 1 + r * 31;
  if ((r + c) % 2) add(grid, 'path', { d: `M${x + 3} ${y - 3}v6h-6z`, fill: '#f66' });
  add(grid, 'path', { d: `M${x - 2} ${y}h5M${x + 0.5} ${y - 2.500}v5`, stroke: '#111', fill: 'none' });
}
```
